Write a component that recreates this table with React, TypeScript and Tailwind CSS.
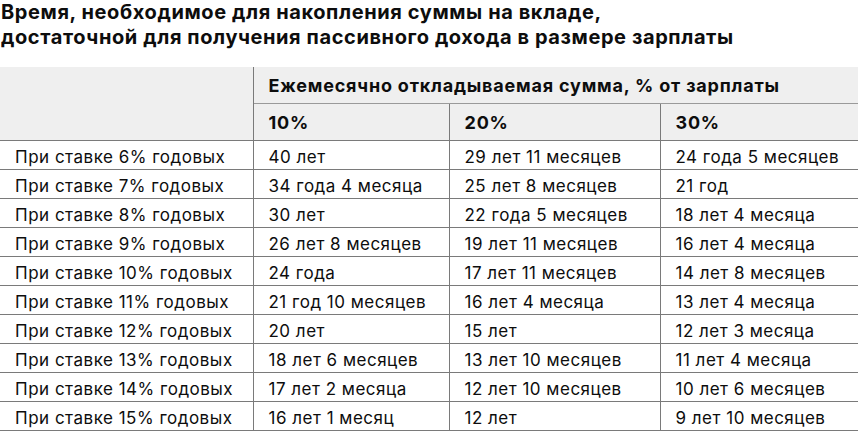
const rows: [string, string, string, string][] = [
  ["При ставке 6% годовых", "40 лет", "29 лет 11 месяцев", "24 года 5 месяцев"],
  ["При ставке 7% годовых", "34 года 4 месяца", "25 лет 8 месяцев", "21 год"],
  ["При ставке 8% годовых", "30 лет", "22 года 5 месяцев", "18 лет 4 месяца"],
  ["При ставке 9% годовых", "26 лет 8 месяцев", "19 лет 11 месяцев", "16 лет 4 месяца"],
  ["При ставке 10% годовых", "24 года", "17 лет 11 месяцев", "14 лет 8 месяцев"],
  ["При ставке 11% годовых", "21 год 10 месяцев", "16 лет 4 месяца", "13 лет 4 месяца"],
  ["При ставке 12% годовых", "20 лет", "15 лет", "12 лет 3 месяца"],
  ["При ставке 13% годовых", "18 лет 6 месяцев", "13 лет 10 месяцев", "11 лет 4 месяца"],
  ["При ставке 14% годовых", "17 лет 2 месяца", "12 лет 10 месяцев", "10 лет 6 месяцев"],
  ["При ставке 15% годовых", "16 лет 1 месяц", "12 лет", "9 лет 10 месяцев"],
]

export default function App() {
  return (
    <main className="w-[858px] h-[433px] overflow-hidden bg-white text-[#0d0d0d] font-['Inter','Liberation_Sans',sans-serif]">
      {/* Title */}
      <h1 className="pl-[1px] text-[20px] leading-[25px] font-bold tracking-[0.6px]">
        Время, необходимое для накопления суммы на вкладе,
        <br />
        достаточной для получения пассивного дохода в размере зарплаты
      </h1>

      {/* Table */}
      <table className="mt-[17px] w-[858px] border-collapse table-fixed text-[17px] leading-[22px] tracking-[0.5px]">
        <colgroup>
          <col className="w-[253px]" />
          <col className="w-[196px]" />
          <col className="w-[211px]" />
          <col className="w-[198px]" />
        </colgroup>
        <thead className="bg-[#efefef] text-[18px] tracking-[0.8px]">
          <tr className="h-[36px]">
            <th rowSpan={2} className="border-r border-b border-[#7a7a7a]"></th>
            <th colSpan={3} className="border-b border-[#9a9a9a] text-left font-bold pl-[15px] pt-[3px] whitespace-nowrap">
              Ежемесячно откладываемая сумма, % от зарплаты
            </th>
          </tr>
          <tr className="h-[37px]">
            <th className="border-r border-b border-[#7a7a7a] text-left font-bold pl-[15px] pt-[2px]">10%</th>
            <th className="border-r border-b border-[#7a7a7a] text-left font-bold pl-[15px] pt-[2px]">20%</th>
            <th className="border-b border-[#7a7a7a] text-left font-bold pl-[15px] pt-[2px]">30%</th>
          </tr>
        </thead>
        <tbody>
          {rows.map((r) => (
            <tr key={r[0]} className="h-[29px]">
              <td className="border-r border-b border-[#7a7a7a] pl-[15px] pt-[4px] whitespace-nowrap">{r[0]}</td>
              <td className="border-r border-b border-[#7a7a7a] pl-[15px] pt-[4px] whitespace-nowrap">{r[1]}</td>
              <td className="border-r border-b border-[#7a7a7a] pl-[15px] pt-[4px] whitespace-nowrap">{r[2]}</td>
              <td className="border-b border-[#7a7a7a] pl-[15px] pt-[4px] whitespace-nowrap">{r[3]}</td>
            </tr>
          ))}
        </tbody>
      </table>
    </main>
  )
}
